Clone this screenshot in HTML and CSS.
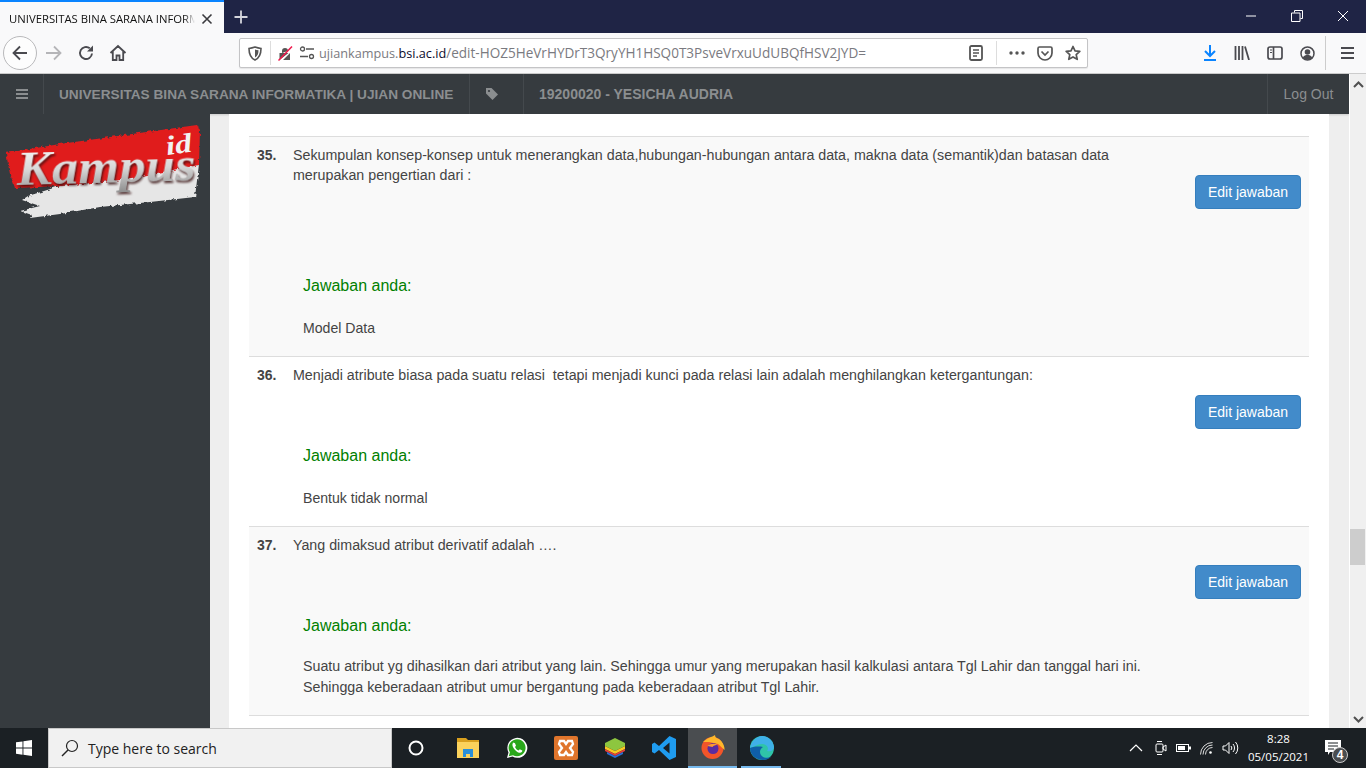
FILE: index.html
```html
<!DOCTYPE html>
<html lang="id">
<head>
    <meta charset="UTF-8">
    <title>UNIVERSITAS BINA SARANA INFORMATIKA | UJIAN ONLINE</title>
    <link rel="stylesheet" href="styles.css">
</head>
<body>
    <div class="tabstrip">
        <div class="tab">
            <span class="tab-title">UNIVERSITAS BINA SARANA INFORMATIKA | UJIAN ONLINE</span>
            <svg class="tab-close" width="14" height="14" viewBox="0 0 14 14"><path d="M2.500 2.500l9 9M11.500 2.500l-9 9" stroke="#3a3a3e" stroke-width="1.600"/></svg>
        </div>
        <svg class="new-tab" width="16" height="16" viewBox="0 0 16 16"><path d="M8 1.500v13M1.500 8h13" stroke="#d4d5dc" stroke-width="1.800"/></svg>
        <div class="window-btns">
            <svg width="12" height="12" viewBox="0 0 12 12"><path d="M1 6h10" stroke="#fff"/></svg>
            <svg width="12" height="12" viewBox="0 0 12 12"><path d="M3.500 2.500V.5h8v8h-2M.5 3h8.500v8.500H.5z" fill="none" stroke="#fff"/></svg>
            <svg width="12" height="12" viewBox="0 0 12 12"><path d="M1 1l10 10M11 1L1 11" stroke="#fff"/></svg>
        </div>
    </div>

    <div class="toolbar">
        <div class="back-btn">
            <svg width="18" height="18" viewBox="0 0 18 18"><path d="M16 9H2.500M9 2.500L2.500 9 9 15.500" fill="none" stroke="#4a4a4f" stroke-width="1.800"/></svg>
        </div>
        <svg class="tb-icon" width="18" height="18" viewBox="0 0 18 18"><path d="M1 9h14M9 2.500L15.500 9 9 15.500" fill="none" stroke="#b5b5b8" stroke-width="1.800"/></svg>
        <svg class="tb-icon reload" width="18" height="18" viewBox="0 0 18 18"><path d="M15 9.500A6 6 0 1 1 12.800 4.300" fill="none" stroke="#4a4a4f" stroke-width="1.900"/><path d="M16 1.500v6h-6z" fill="#4a4a4f"/></svg>
        <svg class="tb-icon home" width="18" height="18" viewBox="0 0 18 18"><path d="M1.500 9L9 2l7.500 7M3.800 7.500V16h3.700v-4.500h3V16h3.700V7.500" fill="none" stroke="#4a4a4f" stroke-width="1.800"/></svg>
        <div class="urlbar">
            <svg width="14" height="15" viewBox="0 0 14 15"><path d="M1 2.500C4 2 5.500 1.500 7 1c1.500.5 3 1 6 1.500 0 6-1.500 9.500-6 11.500-4.500-2-6-5.500-6-11.500z" fill="none" stroke="#555" stroke-width="1.600"/><path d="M7 3.500c1 .3 2 .6 3.500.8 0 3.500-1 5.800-3.500 7.200z" fill="#555"/></svg>
            <span class="url-sep"></span>
            <svg width="15" height="15" viewBox="0 0 15 15"><path d="M1.500 14V7h9l-9 7zM4 7V5a3 3 0 0 1 6 0M12 7v7H5z" fill="#555"/><path d="M0.500 14.500L14 .5" stroke="#f0174b" stroke-width="1.500"/></svg>
            <svg class="perm-icon" width="16" height="14" viewBox="0 0 16 14"><circle cx="3.500" cy="3" r="2" fill="none" stroke="#555" stroke-width="1.300"/><path d="M7 3h8M1 10.500h8" stroke="#555" stroke-width="1.500"/><circle cx="12.500" cy="10.500" r="2" fill="none" stroke="#555" stroke-width="1.300"/></svg>
            <span class="url-text"><span class="url-host">ujiankampus.<b>bsi.ac.id</b></span>/edit-HOZ5HeVrHYDrT3QryYH1HSQ0T3PsveVrxuUdUBQfHSV2JYD=</span>
            <svg class="reader" width="14" height="16" viewBox="0 0 14 16"><rect x="1" y="1" width="12" height="14" rx="1.500" fill="none" stroke="#555" stroke-width="1.800"/><path d="M4 5h6M4 8h6M4 11h4" stroke="#555" stroke-width="1.300"/></svg>
            <span class="url-sep wide"></span>
            <svg width="16" height="4" viewBox="0 0 16 4"><circle cx="2" cy="2" r="1.700" fill="#555"/><circle cx="8" cy="2" r="1.700" fill="#555"/><circle cx="14" cy="2" r="1.700" fill="#555"/></svg>
            <svg class="pocket" width="16" height="15" viewBox="0 0 16 15"><path d="M1 2.500C1 1.500 1.500 1 2.500 1h11c1 0 1.500.5 1.500 1.500V7c0 4-3.500 7-7 7s-7-3-7-7z" fill="none" stroke="#555" stroke-width="1.700"/><path d="M4.500 5.500L8 9l3.500-3.500" fill="none" stroke="#555" stroke-width="1.700"/></svg>
            <svg class="star" width="16" height="16" viewBox="0 0 16 16"><path d="M8 1.500l2 4.400 4.800.5-3.600 3.200 1 4.700L8 11.900l-4.200 2.400 1-4.700L1.200 6.400 6 5.900z" fill="none" stroke="#555" stroke-width="1.700" stroke-linejoin="round"/></svg>
        </div>
        <div class="tb-right">
            <svg width="14" height="16" viewBox="0 0 14 16"><path d="M7 0v10M2 6l5 5 5-5" fill="none" stroke="#0a84ff" stroke-width="2"/><path d="M1 15h12" stroke="#0a84ff" stroke-width="2"/></svg>
            <svg width="16" height="14" viewBox="0 0 16 14"><path d="M1.500 0v14M5 0v14M8.500 0v14M11 .5L15 14" stroke="#4a4a4f" stroke-width="1.800"/></svg>
            <svg width="16" height="14" viewBox="0 0 16 14"><rect x="1" y="1" width="14" height="12" rx="2" fill="none" stroke="#4a4a4f" stroke-width="1.700"/><path d="M6.500 1v12" stroke="#4a4a4f" stroke-width="1.700"/><path d="M3 4h2M3 6.500h2" stroke="#4a4a4f"/></svg>
            <svg width="15" height="15" viewBox="0 0 15 15"><circle cx="7.500" cy="7.500" r="6.500" fill="none" stroke="#4a4a4f" stroke-width="1.500"/><circle cx="7.500" cy="6" r="2.800" fill="#4a4a4f"/><path d="M2.800 11.500c1-2 3-2.500 4.700-2.500s3.700.5 4.700 2.500c-1 1.500-3 2.300-4.700 2.300s-3.700-.8-4.700-2.300z" fill="#4a4a4f"/></svg>
            <span class="tb-sep"></span>
            <svg width="13" height="12" viewBox="0 0 13 12"><path d="M0 1h13M0 6h13M0 11h13" stroke="#4a4a4f" stroke-width="1.800"/></svg>
        </div>
    </div>

    <div class="viewport">
        <div class="page">
            <nav class="navbar">
                <div class="nav-cell toggle">
                    <svg width="12" height="10" viewBox="0 0 12 10"><path d="M0 1h12M0 5h12M0 9h12" stroke="#8b8e90" stroke-width="1.800"/></svg>
                </div>
                <div class="nav-cell brand">UNIVERSITAS BINA SARANA INFORMATIKA | UJIAN ONLINE</div>
                <div class="nav-cell tag">
                    <svg width="14" height="14" viewBox="0 0 14 14"><path d="M1 1h5.500L13 7.500 7.500 13 1 6.500z" fill="#8b8e90"/><circle cx="4" cy="4" r="1.100" fill="#363b3f"/></svg>
                </div>
                <div class="nav-cell user">19200020 - YESICHA AUDRIA</div>
                <div class="nav-cell logout">Log Out</div>
            </nav>
            <div class="page-body">
                <aside class="sidebar">
                    <svg class="logo" width="210" height="110" viewBox="0 0 210 110">
                        <defs>
                            <linearGradient id="silver" x1="0" y1="0" x2="0" y2="1">
                                <stop offset="0" stop-color="#fff"/>
                                <stop offset="0.55" stop-color="#d6d6d6"/>
                                <stop offset="1" stop-color="#8d8d8d"/>
                            </linearGradient>
                            <filter id="brush" x="-5%" y="-5%" width="110%" height="110%">
                                <feTurbulence type="fractalNoise" baseFrequency="0.25" numOctaves="2" seed="4"/>
                                <feDisplacementMap in="SourceGraphic" scale="4"/>
                            </filter>
                        </defs>
                        <g filter="url(#brush)">
                            <path d="M199 50l-4 33-45 5-50 5-40 7-30 4 2-3-12-4 20-5-18-6 6-4 32-10 60-6z" fill="#e6e6e6"/>
                            <path d="M6 39l54-9L197 11l3 5-1 35-79 15-60 6-45 2-5-14z" fill="#e01b1f"/>
                        </g>
                        <text class="logo-kampus" x="17" y="71" textLength="179" lengthAdjust="spacingAndGlyphs" fill="url(#silver)" transform="rotate(-1.500 17 71)">Kampus</text>
                        <text class="logo-id" x="167" y="41" textLength="26" lengthAdjust="spacingAndGlyphs" transform="rotate(-8 167 41)">id</text>
                    </svg>
                </aside>
                <main class="content">
                    <div class="panel">
                        <section class="question odd">
                            <div class="q-head">
                                <span class="q-no">35.</span>
                                <p class="q-text">Sekumpulan konsep-konsep untuk menerangkan data,hubungan-hubungan antara data, makna data (semantik)dan batasan data merupakan pengertian dari :</p>
                            </div>
                            <div class="q-action tall"><a class="btn-edit">Edit jawaban</a></div>
                            <h4 class="answer-label">Jawaban anda:</h4>
                            <p class="answer">Model Data</p>
                        </section>
                        <section class="question">
                            <div class="q-head">
                                <span class="q-no">36.</span>
                                <p class="q-text">Menjadi atribute biasa pada suatu relasi&nbsp; tetapi menjadi kunci pada relasi lain adalah menghilangkan ketergantungan:</p>
                            </div>
                            <div class="q-action"><a class="btn-edit">Edit jawaban</a></div>
                            <h4 class="answer-label">Jawaban anda:</h4>
                            <p class="answer">Bentuk tidak normal</p>
                        </section>
                        <section class="question odd last">
                            <div class="q-head">
                                <span class="q-no">37.</span>
                                <p class="q-text">Yang dimaksud atribut derivatif adalah ….</p>
                            </div>
                            <div class="q-action"><a class="btn-edit">Edit jawaban</a></div>
                            <h4 class="answer-label">Jawaban anda:</h4>
                            <p class="answer multi">Suatu atribut yg dihasilkan dari atribut yang lain. Sehingga umur yang merupakan hasil kalkulasi antara Tgl Lahir dan tanggal hari ini. Sehingga keberadaan atribut umur bergantung pada keberadaan atribut Tgl Lahir.</p>
                        </section>
                    </div>
                </main>
            </div>
        </div>
        <div class="scrollbar">
            <svg width="11" height="7" viewBox="0 0 11 7"><path d="M1 6l4.500-4.500L10 6" fill="none" stroke="#505050" stroke-width="2"/></svg>
            <div class="scroll-track"><div class="scroll-thumb"></div></div>
            <svg width="11" height="7" viewBox="0 0 11 7"><path d="M1 1l4.500 4.500L10 1" fill="none" stroke="#505050" stroke-width="2"/></svg>
        </div>
    </div>

    <footer class="taskbar">
        <div class="start">
            <svg width="16" height="16" viewBox="0 0 16 16"><path d="M0 2.300l6.500-.9v6.200H0zM7.400 1.300L16 0v7.600H7.400zM0 8.500h6.500v6.200L0 13.800zM7.400 8.500H16V16l-8.600-1.200z" fill="#fff"/></svg>
        </div>
        <div class="searchbox">
            <svg width="18" height="18" viewBox="0 0 18 18"><circle cx="11" cy="7" r="5.500" fill="none" stroke="#222" stroke-width="1.200"/><path d="M7 11l-6 6" stroke="#222" stroke-width="1.400"/></svg>
            <span>Type here to search</span>
        </div>
        <div class="task-icons">
            <div class="task-item cortana"><svg width="16" height="16" viewBox="0 0 16 16"><circle cx="8" cy="8" r="6.500" fill="none" stroke="#fff" stroke-width="2"/></svg></div>
            <div class="task-item"><svg width="22" height="20" viewBox="0 0 22 20"><path d="M0 0h9l2 2h11v5H0z" fill="#d9a01e"/><path d="M0 4h22v16H0z" fill="#fbd25c"/><path d="M6 11h10v8h-3v-3H9v3H6z" fill="#2a8fd8"/></svg></div>
            <div class="task-item"><svg width="22" height="22" viewBox="0 0 22 22"><path d="M1 21l1.500-5.500A10 10 0 1 1 6.500 19.600z" fill="#fff"/><path d="M2.800 19.200l1.100-3.900A8.500 8.500 0 1 1 7 18.200z" fill="#29a71a"/><path d="M7.500 5.500c-1.500 1-1.500 3 0 5.500s4.500 5 6.500 4.800c1.500-.2 2.500-1.300 2.300-2.300l-2.500-1.200-1.200 1.200c-1.500-.5-3-2-3.600-3.500l1-1.200-1-2.600c-.5-.4-1.500-.4-2.500-.7z" fill="#fff"/></svg></div>
            <div class="task-item"><svg width="24" height="24" viewBox="0 0 24 24"><rect width="24" height="24" rx="2" fill="#e0752c"/><path d="M6 5h4l2 3 2-3h4l1 3-3 4 3 4-1 3h-4l-2-3-2 3H6l-1-3 3-4-3-4z" fill="none" stroke="#fff" stroke-width="2.300"/></svg></div>
            <div class="task-item"><svg width="22" height="20" viewBox="0 0 22 20"><path d="M11 0l10 5v3L11 13 1 8V5z" fill="#8dc63f"/><path d="M1 8l10 5 10-5v3l-10 5-10-5z" fill="#f7c923"/><path d="M1 11l10 5 10-5v2l-10 5-10-5z" fill="#e53d3a"/><path d="M3 14l8 4 8-4v2l-8 4-8-4z" fill="#2a6fd4"/></svg></div>
            <div class="task-item"><svg width="24" height="24" viewBox="0 0 24 24"><path d="M17.500 0L24 3v18l-6.500 3L7 14l-4.500 3.500L0 16v-8l2.500-1.500L7 10zM17.500 6.500L11 12l6.500 5.500z" fill="#1f9cf0"/></svg></div>
            <div class="task-item active"><svg width="24" height="24" viewBox="0 0 24 24"><circle cx="11.500" cy="13" r="11" fill="#f2552a"/><path d="M2 7c4-4 9-5 12-7 0 2 1 3 4 4 4 3 6 8 5.500 11L17 9 8 7z" fill="#ffb72b"/><circle cx="12" cy="13.500" r="5.500" fill="#5a2ca0"/><path d="M6.500 11c2-2.500 7-3 10-1.500-2 1-4 1-5 2.500z" fill="#ff9a2e"/></svg></div>
            <div class="task-item open"><svg width="24" height="24" viewBox="0 0 24 24"><circle cx="12" cy="12" r="12" fill="#2fc4a8"/><path d="M0 12C1 5 7 0 12 0c6 0 11 4 12 11 0 3-3 5-7 4 2-2 1-6-4-7-5-.5-9 3-13 4z" fill="#3fb0e8"/><path d="M0 12c0 7 6 12 13 12 3 0 6-1 8-3-5 2-11 0-11-5 0-2 1-4 3-5C8 10 2 11 0 12z" fill="#0f5fa8"/></svg></div>
        </div>
        <div class="tray">
            <svg class="tray-up" width="14" height="8" viewBox="0 0 14 8"><path d="M1 7l6-6 6 6" fill="none" stroke="#fff" stroke-width="1.200"/></svg>
            <svg width="12" height="16" viewBox="0 0 12 16"><rect x="1" y="4" width="7" height="8" rx="1" fill="none" stroke="#fff"/><path d="M8 7l3-2v6L8 9zM2 1.500h5M2 14.500h5" fill="none" stroke="#fff"/></svg>
            <svg width="15" height="8" viewBox="0 0 15 8"><rect x=".5" y=".5" width="12" height="7" fill="none" stroke="#fff"/><rect x="2" y="2" width="7" height="4" fill="#fff"/><rect x="13" y="2.500" width="2" height="3" fill="#fff"/></svg>
            <svg width="13" height="13" viewBox="0 0 13 13"><path d="M.5 12.500A12 12 0 0 1 12.500.5M3 12.500A9.500 9.500 0 0 1 12.500 3M5.500 12.500a7 7 0 0 1 7-7" fill="none" stroke="#ddd"/><circle cx="10.500" cy="10.500" r="1.300" fill="#fff"/></svg>
            <svg width="17" height="14" viewBox="0 0 17 14"><path d="M1 5h2.500L7 1.500v11L3.500 9H1z" fill="none" stroke="#fff"/><path d="M9 5a3 3 0 0 1 0 4M11 3a6 6 0 0 1 0 8M13.500 1a9 9 0 0 1 0 12" fill="none" stroke="#fff"/></svg>
            <div class="clock"><div>8:28</div><div>05/05/2021</div></div>
            <div class="notif">
                <svg width="16" height="15" viewBox="0 0 16 15"><path d="M0 0h16v12H5l-2 3v-3H0z" fill="#fff"/><path d="M3 3h10M3 6h10M3 9h6" stroke="#1b2024"/></svg>
                <span class="notif-count">4</span>
            </div>
        </div>
    </footer>
</body>
</html>
```

FILE: styles.css
```css
* {
    box-sizing: border-box;
}
html, body {
    height: 100%;
}
body {
    margin: 0;
    height: 768px;
    overflow: hidden;
    display: flex;
    flex-direction: column;
    font-family: "Liberation Sans", Arial, sans-serif;
    font-size: 14px;
    color: #444;
    background-color: #eee;
}
p, h4 {
    margin: 0;
}

/* browser chrome */
.tabstrip {
    height: 33px;
    display: flex;
    align-items: center;
    background-color: #1f2445;
}
.tab {
    width: 224px;
    height: 33px;
    padding: 2px 9px 0 9px;
    display: flex;
    align-items: center;
    gap: 5px;
    background-color: #f9f9fa;
    border-top: 2px solid #0a84ff;
}
.tab-title {
    width: 186px;
    overflow: hidden;
    white-space: nowrap;
    font-family: "Open Sans", sans-serif;
    font-size: 11.300px;
    color: #111;
    -webkit-mask-image: linear-gradient(to right, #000 175px, transparent 186px);
    mask-image: linear-gradient(to right, #000 175px, transparent 186px);
}
.new-tab {
    margin-left: 9px;
}
.window-btns {
    margin-left: auto;
    display: flex;
    gap: 34px;
    padding: 0 17px 2px 0;
}
.toolbar {
    height: 41px;
    display: flex;
    align-items: center;
    padding-left: 3px;
    background-color: #f9f9fa;
    border-bottom: 1px solid #ccc;
}
.back-btn {
    width: 34px;
    height: 34px;
    display: flex;
    align-items: center;
    justify-content: center;
    border: 1px solid #b9b9bb;
    border-radius: 50%;
    background-color: #fdfdfd;
}
.tb-icon {
    margin-left: 8px;
}
.tb-icon.reload {
    margin-left: 14px;
}
.tb-icon.home {
    margin-left: 14px;
}
.urlbar {
    width: 849px;
    height: 30px;
    display: flex;
    align-items: center;
    padding-left: 8px;
    background-color: #fff;
    border: 1px solid #c4c4c6;
    border-radius: 2px;
    box-shadow: 0 1px 1px rgba(0,0,0,0.08);
    margin-left: 112px;
}
.url-sep {
    width: 1px;
    height: 24px;
    margin: 0 7px 0 8px;
    background-color: #ddd;
}
.url-sep.wide {
    margin: 0 12px 0 13px;
}
.perm-icon {
    margin-left: 6px;
}
.url-text {
    width: 640px;
    margin-left: 4px;
    white-space: nowrap;
    font-family: "Open Sans", sans-serif;
    font-size: 13.550px;
    color: #7a7a80;
}
.url-host {
    font-size: 12.700px;
}
.url-text b {
    font-weight: 400;
    color: #0c0c2d;
}
.reader {
    margin-left: auto;
}
.pocket, .star {
    margin-left: 12px;
}
.star {
    margin-right: 6px;
}
.tb-right {
    flex: 1;
    display: flex;
    align-items: center;
    gap: 17px;
    padding-left: 115px;
}
.tb-sep {
    width: 1px;
    height: 34px;
    margin: 0 -2px 0 -7px;
    background-color: #ccc;
}

/* page */
.viewport {
    flex: 1;
    min-height: 0;
    display: flex;
}
.page {
    flex: 1;
    min-width: 0;
    display: flex;
    flex-direction: column;
}
.navbar {
    height: 40px;
    flex-shrink: 0;
    display: flex;
    align-items: stretch;
    background-color: #363b3f;
    font-weight: 700;
    color: #8b8e90;
    box-shadow: 0 1px 2px rgba(0,0,0,0.15);
}
.nav-cell {
    display: flex;
    align-items: center;
    border-right: 1px solid #44494d;
}
.toggle {
    width: 44px;
    justify-content: center;
}
.brand {
    width: 426px;
    padding-left: 15px;
    font-size: 13.650px;
}
.tag {
    width: 54px;
    padding-left: 15px;
}
.user {
    padding-left: 15px;
    border-right: 0;
}
.logout {
    margin-left: auto;
    width: 82px;
    justify-content: center;
    font-weight: 400;
    border-right: 0;
    border-left: 1px solid #44494d;
}
.page-body {
    flex: 1;
    min-height: 0;
    display: flex;
}
.sidebar {
    width: 210px;
    flex-shrink: 0;
    background-color: #363b3f;
}
.logo {
    display: block;
}
.logo-kampus {
    font-family: "Liberation Serif", serif;
    font-style: italic;
    font-weight: 700;
    font-size: 48px;
    filter: drop-shadow(1px 2px 1px rgba(50, 10, 10, 0.8));
}
.logo-id {
    font-family: "Liberation Serif", serif;
    font-style: italic;
    font-weight: 700;
    font-size: 27px;
    fill: #f2f2f2;
}
.content {
    flex: 1;
    min-width: 0;
    overflow: hidden;
    padding: 0 20px 0 19px;
}
.panel {
    height: 100%;
    padding: 22px 20px 0 20px;
    background-color: #fff;
}

/* questions */
.question {
    padding: 8px 8px 0 8px;
    border-top: 1px solid #ddd;
}
.question.last {
    border-bottom: 1px solid #ddd;
}
.question.odd {
    background-color: #f9f9f9;
}
.q-head {
    display: flex;
    line-height: 20px;
}
.q-no {
    width: 36px;
    flex-shrink: 0;
    font-weight: 700;
}
.q-text {
    width: 840px;
    font-size: 14.250px;
}
.q-action {
    display: flex;
    justify-content: flex-end;
    margin-top: 10px;
}
.q-action.tall {
    margin: -10px 0 67px;
}
.btn-edit {
    width: 106px;
    height: 34px;
    display: flex;
    align-items: center;
    justify-content: center;
    color: #fff;
    background-color: #428bca;
    border: 1px solid #357ebd;
    border-radius: 4px;
}
.answer-label {
    margin: 17px 0 0 46px;
    font-size: 16px;
    font-weight: 400;
    line-height: 20px;
    color: #008000;
}
.answer {
    width: 880px;
    margin: 22px 0 0 46px;
    padding-bottom: 17px;
    line-height: 21px;
    font-size: 14.100px;
}
.answer.multi {
    margin-top: 20px;
    font-size: 14.250px;
}

/* scrollbar */
.scrollbar {
    width: 17px;
    flex-shrink: 0;
    display: flex;
    flex-direction: column;
    align-items: center;
    padding: 7px 0 5px;
    background-color: #f0f0f0;
    border-left: 1px solid #fff;
}
.scroll-track {
    flex: 1;
    width: 100%;
}
.scroll-thumb {
    height: 36px;
    margin: 441px 1px 0 0;
    background-color: #cdcdcd;
}

/* windows taskbar */
.taskbar {
    height: 40px;
    flex-shrink: 0;
    display: flex;
    align-items: stretch;
    background-color: #1b2024;
}
.start {
    width: 48px;
    display: flex;
    align-items: center;
    justify-content: center;
}
.searchbox {
    width: 344px;
    display: flex;
    align-items: center;
    gap: 9px;
    padding-left: 12px;
    background-color: #f1f1f1;
    border: 1px solid #c8c8c8;
    font-family: "Open Sans", sans-serif;
    font-size: 14px;
    color: #222;
}
.task-icons {
    display: flex;
}
.task-item {
    width: 49px;
    display: flex;
    align-items: center;
    justify-content: center;
}
.task-item.cortana {
    width: 51px;
    padding-right: 3px;
}
.task-item.active {
    background-color: #4a4d50;
    border-bottom: 2px solid #76b9ed;
}
.task-item.open {
    position: relative;
}
.task-item.open::after {
    content: "";
    position: absolute;
    left: 4px;
    right: 5px;
    bottom: 0;
    height: 2px;
    background-color: #76b9ed;
}
.tray {
    margin-left: auto;
    display: flex;
    align-items: center;
    gap: 9px;
    padding-right: 19px;
}
.tray-up {
    margin-right: 3px;
}
.clock {
    margin: 0 7px 0 0;
    text-align: center;
    font-family: "Open Sans", sans-serif;
    font-size: 11.500px;
    line-height: 18px;
    color: #fff;
}
.notif {
    position: relative;
    width: 22px;
    height: 24px;
    padding-top: 4px;
}
.notif svg {
    display: block;
}
.notif-count {
    position: absolute;
    right: -1px;
    bottom: -3px;
    width: 16px;
    height: 16px;
    border-radius: 50%;
    background-color: #4a4d50;
    border: 1px solid #ccc;
    font-size: 12px;
    font-weight: 700;
    line-height: 14px;
    text-align: center;
    color: #fff;
}
```
